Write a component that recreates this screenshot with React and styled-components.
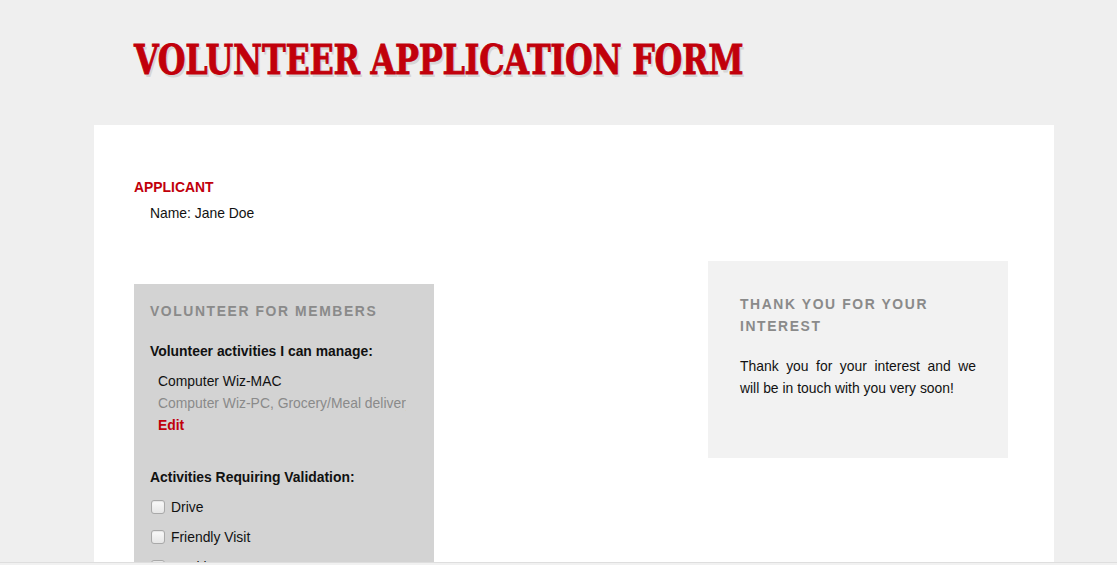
import React from "react";
import styled, { createGlobalStyle } from "styled-components";

const GlobalStyle = createGlobalStyle`
  html, body {
    margin: 0;
    padding: 0;
    background: #efefef;
    font-family: "Liberation Sans", Arial, sans-serif;
    color: #111;
    overflow: hidden;
  }
`;

const Page = styled.div`
  width: 960px;
  margin: 0 0 0 94px;
`;

const Header = styled.header`
  height: 125px;
  padding: 0 40px;
  box-sizing: border-box;
  display: flex;
  align-items: flex-start;
`;

const Title = styled.h1`
  margin: 38px 0 0;
  font-family: "DejaVu Serif Condensed", "DejaVu Serif", serif;
  font-stretch: condensed;
  font-weight: 900;
  font-size: 41px;
  line-height: 44px;
  letter-spacing: -0.3px;
  color: #c1000b;
  -webkit-text-stroke: 0.8px #c1000b;
  text-shadow: 2px 3px 0 #d6d6d6;
  white-space: nowrap;
  transform: scaleX(0.864);
  transform-origin: left center;
`;

const Card = styled.main`
  background: #fff;
  padding: 51px 40px 60px;
  min-height: 500px;
`;

const SectionLabel = styled.div`
  font-size: 13.9px;
  line-height: 22px;
  font-weight: bold;
  color: #c1000b;
`;

const Field = styled.div`
  margin: 4px 0 0 16px;
  font-size: 13.9px;
  line-height: 22px;
`;

const Columns = styled.div`
  display: flex;
  justify-content: space-between;
  align-items: flex-start;
  margin-top: 37px;
  padding-right: 6px;
`;

const Panel = styled.section`
  width: 300px;
  box-sizing: border-box;
  background: ${(p) => (p.$tone === "dark" ? "#d3d3d3" : "#f2f2f2")};
  padding: ${(p) => (p.$tone === "dark" ? "16px 16px 30px" : "32px 32px 59px")};
  margin-top: ${(p) => p.$offset || 0}px;
`;

const PanelTitle = styled.h2`
  margin: 0;
  font-size: 13.9px;
  line-height: 22px;
  font-weight: bold;
  letter-spacing: 1.6px;
  text-transform: uppercase;
  color: #8a8a8a;
`;

const SubHead = styled.h3`
  margin: ${(p) => p.$gap || 18}px 0 0;
  font-size: 13.9px;
  line-height: 22px;
  font-weight: bold;
  color: #111;
`;

const List = styled.div`
  margin: 8px 12px 0 8px;
  font-size: 13.9px;
  line-height: 22px;
`;

const Item = styled.div`
  color: ${(p) => (p.$muted ? "#8a8a8a" : "#111")};
  white-space: nowrap;
  overflow: hidden;
`;

const EditLink = styled.a`
  display: block;
  color: #c1000b;
  font-weight: bold;
  text-decoration: none;
  cursor: pointer;
`;

const CheckRow = styled.label`
  display: flex;
  align-items: center;
  gap: 6px;
  margin-top: 8px;
  font-size: 13.9px;
  line-height: 22px;
  color: #111;
`;

const Box = styled.span`
  width: 12px;
  height: 12px;
  margin-left: 1px;
  border: 1px solid #a9a9a9;
  border-radius: 3px;
  background: linear-gradient(#fafafa, #e6e6e6);
  box-shadow: inset 0 1px 1px rgba(0, 0, 0, 0.08);
  flex: none;
`;

const Body = styled.p`
  margin: 18px 0 0;
  font-size: 13.9px;
  line-height: 22px;
  text-align: justify;
  color: #111;
`;

const BottomEdge = styled.div`
  position: fixed;
  left: 0;
  right: 0;
  bottom: 0;
  height: 2px;
  background: #f1f1f1;
  border-top: 1px solid #dedede;
`;

const validation = ["Drive", "Friendly Visit", "Cooking"];

export default function App() {
  return (
    <>
      <GlobalStyle />
      <Page>
        <Header>
          <Title>VOLUNTEER APPLICATION FORM</Title>
        </Header>
        <Card>
          <SectionLabel>APPLICANT</SectionLabel>
          <Field>Name: Jane Doe</Field>
          <Columns>
            <Panel $tone="dark" $offset={23}>
              <PanelTitle>Volunteer for Members</PanelTitle>
              <SubHead>Volunteer activities I can manage:</SubHead>
              <List>
                <Item>Computer Wiz-MAC</Item>
                <Item $muted>Computer Wiz-PC, Grocery/Meal delivery</Item>
                <EditLink>Edit</EditLink>
              </List>
              <SubHead $gap={30}>Activities Requiring Validation:</SubHead>
              {validation.map((name) => (
                <CheckRow key={name}>
                  <Box />
                  {name}
                </CheckRow>
              ))}
            </Panel>
            <Panel $tone="light">
              <PanelTitle>Thank you for your interest</PanelTitle>
              <Body>
                Thank you for your interest and we will be in touch with you very soon!
              </Body>
            </Panel>
          </Columns>
        </Card>
      </Page>
      <BottomEdge />
    </>
  );
}
